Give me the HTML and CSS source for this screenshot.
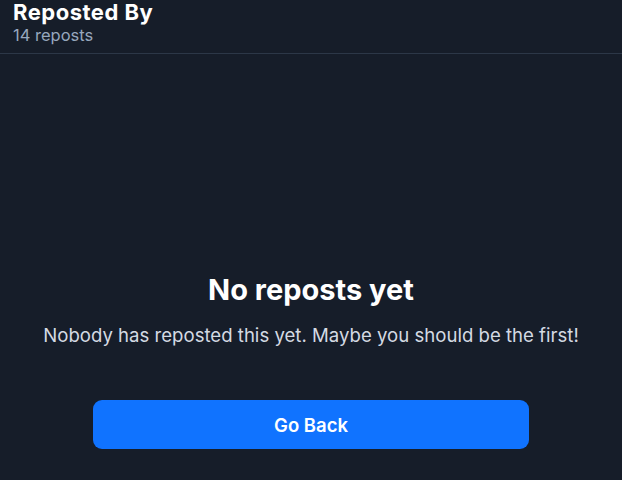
FILE: index.html
```html
<!DOCTYPE html>
<html>
<head>
<meta charset="utf-8">
<link rel="stylesheet" href="styles.css">
</head>
<body>
<div class="page">
  <header class="header">
    <div class="title">Reposted By</div>
    <div class="count">14 reposts</div>
  </header>
  <main class="empty">
    <h1 class="empty-title">No reposts yet</h1>
    <p class="empty-text">Nobody has reposted this yet. Maybe you should be the first!</p>
    <button class="back">Go Back</button>
  </main>
</div>
</body>
</html>
```
FILE: styles.css
```css
html, body {
  margin: 0;
  padding: 0;
  background: #161d29;
  height: 100%;
}
body {
  font-family: Inter, "Noto Sans", sans-serif;
  color: #fff;
  overflow: hidden;
}
.page {
  width: 622px;
  height: 480px;
  display: flex;
  flex-direction: column;
}
.header {
  padding: 0 13px 8px;
  border-bottom: 1px solid #2c3747;
}
.title {
  font-size: 22px;
  font-weight: 700;
  line-height: 27px;
  margin-top: -1px;
  letter-spacing: 0.5px;
}
.count {
  font-size: 16.5px;
  line-height: 20px;
  color: #97a7bd;
  margin-top: -1px;
}
.empty {
  display: flex;
  flex-direction: column;
  align-items: center;
  padding-top: 218px;
}
.empty-title {
  margin: 0;
  font-size: 29px;
  font-weight: 700;
  line-height: 35px;
}
.empty-text {
  margin: 17px 0 0;
  font-size: 18.6px;
  line-height: 23px;
  color: #d4dae3;
}
.back {
  margin-top: 53px;
  width: 436px;
  height: 49px;
  border: none;
  border-radius: 9px;
  background: #1073ff;
  color: #fff;
  font-family: Inter, "Noto Sans", sans-serif;
  font-size: 18.5px;
  font-weight: 600;
}
```
